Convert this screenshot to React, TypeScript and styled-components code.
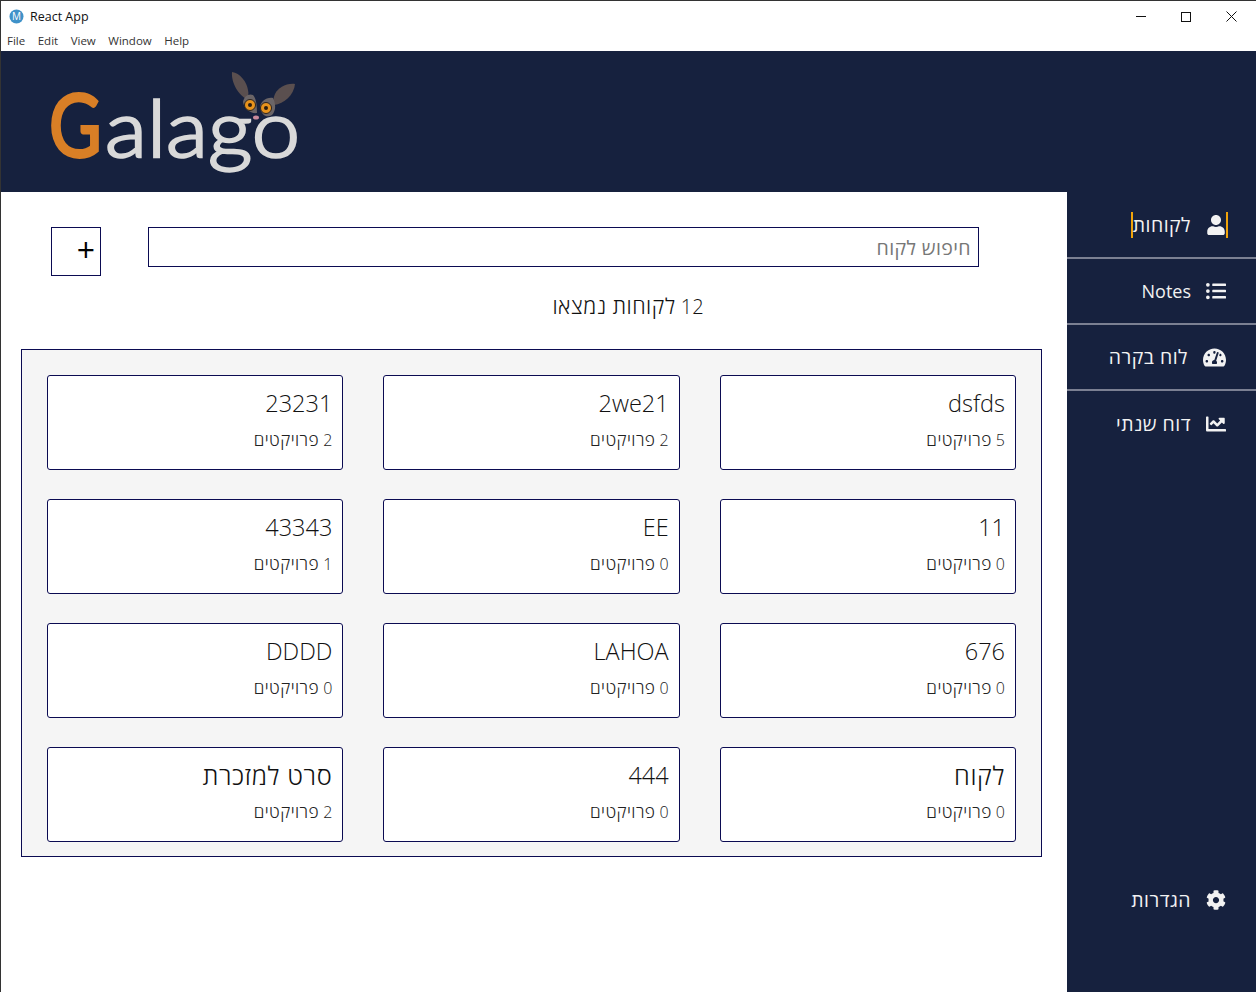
import React from "react";
import styled, { createGlobalStyle } from "styled-components";
import { FaUser, FaListUl, FaTachometerAlt, FaChartLine, FaCog } from "react-icons/fa";

const navy = "#16213e";
const line = "#0b0b52";
const font = `"Open Sans", "Noto Sans", "Liberation Sans", sans-serif`;

const Global = createGlobalStyle`
  html, body { margin: 0; padding: 0; background: #fff; }
  body { font-family: ${font}; }
  * { box-sizing: border-box; }
`;

const Frame = styled.div`
  width: 1256px;
  height: 992px;
  display: flex;
  flex-direction: column;
  overflow: hidden;
  background: #fff;
  border-top: 1px solid #333;
  border-left: 1px solid #333;
`;

const TitleBar = styled.div`
  height: 29px;
  flex: none;
  display: flex;
  align-items: center;
  padding: 1px 0 0 8px;
  gap: 6px;
  font-size: 12.5px;
  color: #111;
`;

const TitleText = styled.span`
  flex: 1;
`;

const WindowButtons = styled.div`
  display: flex;
  align-items: center;
  gap: 30px;
  padding-right: 17px;
`;

const WindowIcon = styled.svg`
  display: block;
  width: 15px;
  height: 15px;
  fill: none;
  stroke: #111;
  stroke-width: 1;
`;

const MenuBar = styled.div`
  height: 21px;
  flex: none;
  display: flex;
  align-items: center;
  gap: 12.5px;
  padding-left: 6px;
  font-size: 11.5px;
  color: #333;
`;

const Header = styled.header`
  height: 141px;
  flex: none;
  background: ${navy};
  padding: 15px 0 0 39px;
`;

const LogoSvg = styled.svg`
  display: block;
  width: 270px;
  height: 115px;
`;

const Body = styled.div`
  flex: 1;
  min-height: 0;
  display: flex;
  direction: rtl;
`;

const He = styled.span`
  font-size: 1.08em;
  letter-spacing: 0.025em;
`;

const Sidebar = styled.nav`
  width: 189px;
  flex: none;
  background: ${navy};
  display: flex;
  flex-direction: column;
  padding-top: 1px;
  color: #f2f2f2;
`;

const NavItem = styled.div<{ $bottom?: boolean; $plain?: boolean }>`
  height: 66px;
  flex: none;
  display: flex;
  align-items: center;
  padding-right: 30px;
  border-bottom: ${(p) => (p.$bottom || p.$plain ? "0" : "2px solid #7b8092")};
  ${(p) => p.$bottom && "margin-top: auto; margin-bottom: 59px;"}
`;

const NavInner = styled.div<{ $active?: boolean }>`
  display: flex;
  align-items: center;
  gap: 15px;
  height: 26px;
  font-size: 18px;
  line-height: 26px;
  ${(p) =>
    p.$active
      ? `border-left: 2px solid #f0a30a; border-right: 2px solid #f0a30a; margin-right: -2px;`
      : ""}
`;

const NavIcon = styled.span<{ $size?: number }>`
  display: flex;
  & > svg {
    width: auto;
    height: ${(p) => p.$size ?? 20}px;
  }
`;

const Main = styled.main`
  flex: 1;
  min-width: 0;
  display: flex;
  flex-direction: column;
  background: #fff;
`;

const TopRow = styled.div`
  display: flex;
  align-items: flex-start;
  gap: 47px;
  padding: 35px 88px 0 50px;
`;

const Search = styled.input`
  flex: 1;
  min-width: 0;
  height: 40px;
  border: 1px solid ${line};
  padding: 0 7px;
  font-family: ${font};
  font-size: 19.500px;
  letter-spacing: 0.02em;
  background: #fff;
  outline: none;
  &::placeholder {
    color: #777;
    opacity: 1;
  }
`;

const AddButton = styled.button`
  width: 50px;
  height: 49px;
  flex: none;
  border: 1px solid ${line};
  background: #fff;
  padding: 0 5px 4px 0;
  text-align: right;
  font-family: ${font};
  font-size: 32px;
  line-height: 40px;
  color: #000;
`;

const Count = styled.div`
  margin-top: 10px;
  height: 40px;
  padding-left: 188px;
  text-align: center;
  font-size: 20px;
  font-weight: 300;
  line-height: 40px;
  color: #111;
`;

const Panel = styled.section`
  margin: 23px 25px 0 20px;
  padding: 25px 25px 14px;
  background: #f5f5f5;
  border: 1px solid ${line};
  display: grid;
  grid-template-columns: repeat(3, 1fr);
  gap: 29px 40px;
`;

const Card = styled.article`
  height: 95px;
  background: #fff;
  border: 1px solid ${line};
  border-radius: 3px;
  padding: 9px 10px 0;
`;

const CardTitle = styled.div`
  height: 36px;
  font-size: 23.500px;
  font-weight: 300;
  line-height: 36px;
  color: #111;
`;

const CardSub = styled.div`
  margin-top: 7px;
  height: 24px;
  font-size: 16px;
  font-weight: 300;
  line-height: 24px;
  color: #222;
`;

const clients: { name: React.ReactNode; key: string; n: number }[] = [
  { key: "dsfds", name: "dsfds", n: 5 },
  { key: "2we21", name: "2we21", n: 2 },
  { key: "23231", name: "23231", n: 2 },
  { key: "11", name: "11", n: 0 },
  { key: "EE", name: "EE", n: 0 },
  { key: "43343", name: "43343", n: 1 },
  { key: "676", name: "676", n: 0 },
  { key: "LAHOA", name: "LAHOA", n: 0 },
  { key: "DDDD", name: "DDDD", n: 0 },
  { key: "client", name: <He>לקוח</He>, n: 0 },
  { key: "444", name: "444", n: 0 },
  { key: "souvenir", name: <He>סרט למזכרת</He>, n: 2 },
];

const Logo = () => (
  <LogoSvg viewBox="40 66 270 115" role="img" aria-label="Galago">
    <path d="M232 72c8 1 15 10 16 18 1 4 0 7-1 9-8-3-16-16-15-27z" fill="#5a4f4f" />
    <path d="M295 84c-9-1-17 4-20 10-2 4-2 8-1 11 10-1 20-10 21-21z" fill="#5a4f4f" />
    <path d="M243 102c1-6 6-9 10-7 3 3 4 10 4 18-6 1-13-4-14-11zM260 108c0-6 6-11 13-10 3 6 3 13-1 17-5 3-10 1-12-7z" fill="#6b6567" />
    <text transform="translate(49 157) scale(0.82 1)" fontFamily="Lato, sans-serif" fontWeight="400" fontSize="88" fill="#d97f26" stroke="#d97f26" strokeWidth="3">G</text>
    <text x="105" y="157" fontFamily="Lato, sans-serif" fontWeight="300" fontSize="78" fill="#d9d9d9" stroke="#d9d9d9" strokeWidth="2.500" textLength="195" lengthAdjust="spacingAndGlyphs">alago</text>
    <circle cx="250" cy="105" r="5.500" fill="#e8931c" stroke="#2a2320" />
    <circle cx="250" cy="105" r="2" fill="#2a1d10" />
    <circle cx="266" cy="108" r="5.500" fill="#e8931c" stroke="#2a2320" />
    <circle cx="266" cy="108" r="2" fill="#2a1d10" />
    <ellipse cx="256" cy="117.500" rx="3" ry="2" fill="#c98a9c" />
  </LogoSvg>
);

export default function App() {
  return (
    <>
      <Global />
      <Frame>
        <TitleBar>
          <svg width="15" height="15" viewBox="0 0 15 15" aria-hidden>
            <circle cx="7.500" cy="7.500" r="7" fill="#3f92c9" />
            <text x="7.500" y="11" textAnchor="middle" fontFamily="Open Sans, sans-serif" fontSize="10" fill="#fff">M</text>
          </svg>
          <TitleText>React App</TitleText>
          <WindowButtons>
            <WindowIcon viewBox="0 0 15 15"><path d="M2 7.500h10" /></WindowIcon>
            <WindowIcon viewBox="0 0 15 15"><rect x="2.500" y="3.500" width="9" height="9" /></WindowIcon>
            <WindowIcon viewBox="0 0 15 15"><path d="M2.500 2.500l10 10M12.500 2.500l-10 10" /></WindowIcon>
          </WindowButtons>
        </TitleBar>
        <MenuBar>
          <span>File</span><span>Edit</span><span>View</span><span>Window</span><span>Help</span>
        </MenuBar>
        <Header><Logo /></Header>
        <Body>
          <Sidebar>
            <NavItem>
              <NavInner $active><NavIcon><FaUser /></NavIcon><He>לקוחות</He></NavInner>
            </NavItem>
            <NavItem>
              <NavInner><NavIcon><FaListUl /></NavIcon><span>Notes</span></NavInner>
            </NavItem>
            <NavItem>
              <NavInner><NavIcon $size={23}><FaTachometerAlt /></NavIcon><He>לוח בקרה</He></NavInner>
            </NavItem>
            <NavItem $plain>
              <NavInner><NavIcon><FaChartLine /></NavIcon><He>דוח שנתי</He></NavInner>
            </NavItem>
            <NavItem $bottom>
              <NavInner><NavIcon><FaCog /></NavIcon><He>הגדרות</He></NavInner>
            </NavItem>
          </Sidebar>
          <Main>
            <TopRow>
              <Search placeholder="חיפוש לקוח" />
              <AddButton>+</AddButton>
            </TopRow>
            <Count>12 <He>לקוחות נמצאו</He></Count>
            <Panel>
              {clients.map(({ key, name, n }) => (
                <Card key={key}>
                  <CardTitle>{name}</CardTitle>
                  <CardSub>{n} <He>פרויקטים</He></CardSub>
                </Card>
              ))}
            </Panel>
          </Main>
        </Body>
      </Frame>
    </>
  );
}
